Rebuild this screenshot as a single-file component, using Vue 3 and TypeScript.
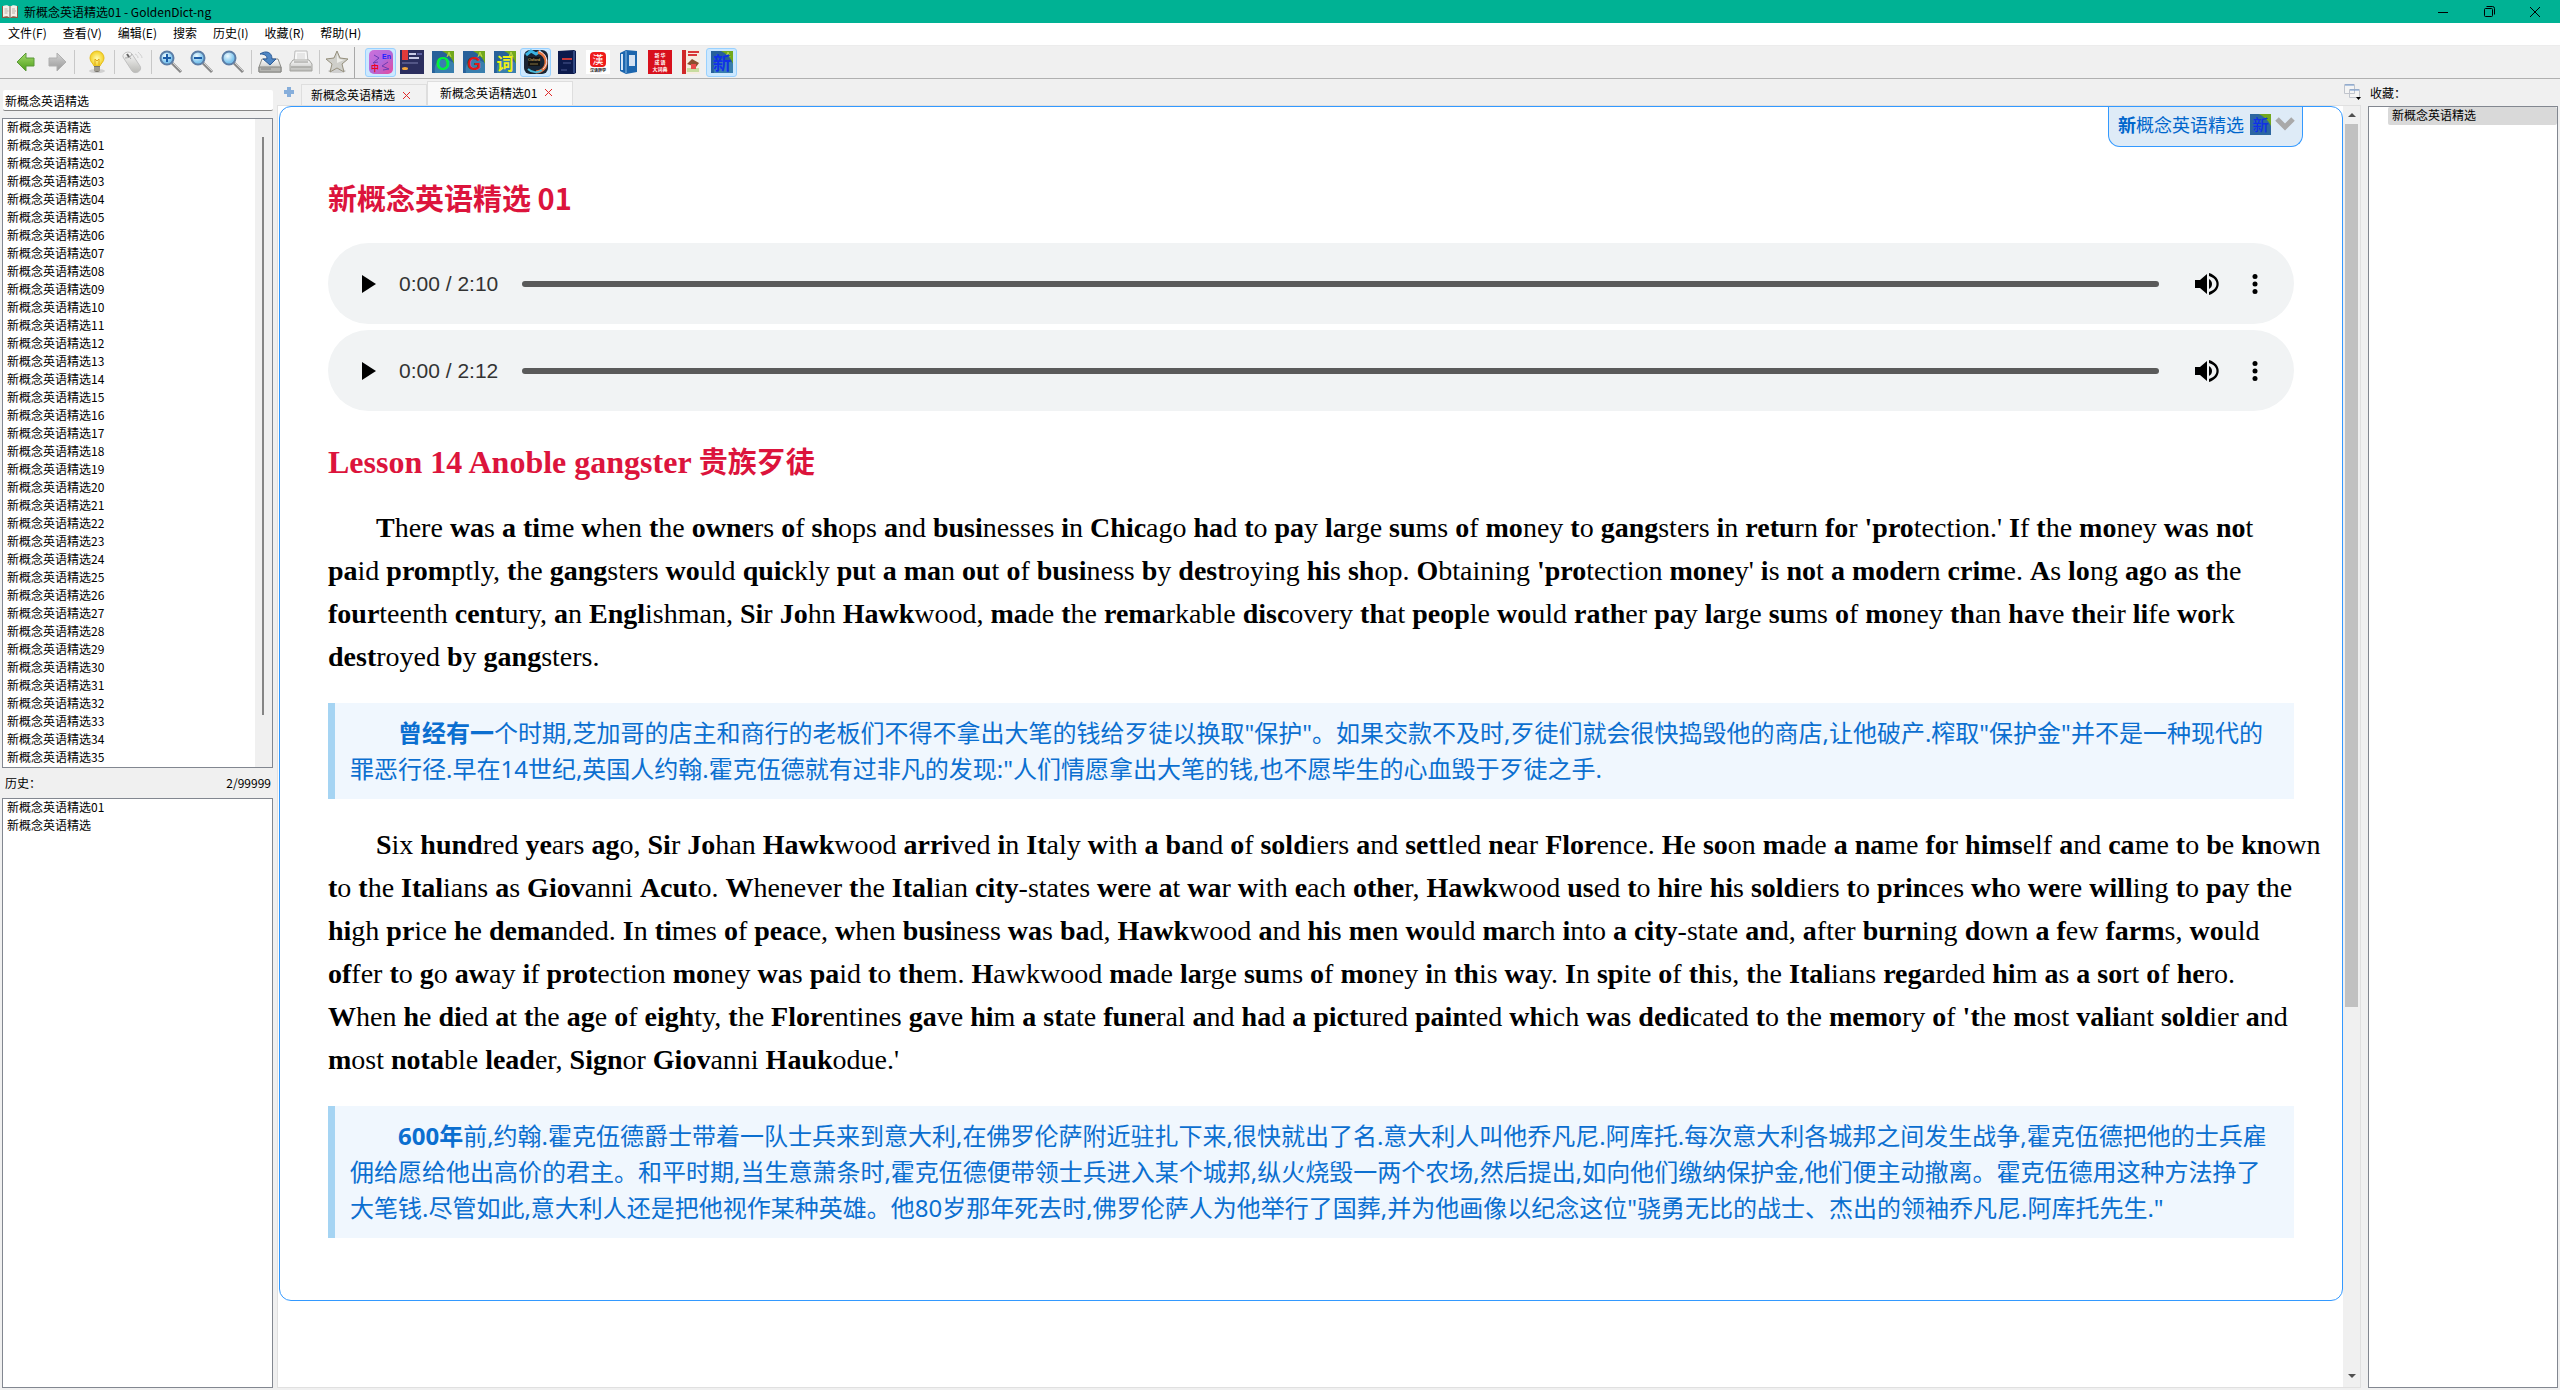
<script setup lang="ts">
import { ref } from 'vue'

interface Run { text: string; strong: boolean }

const menus = ['文件(F)', '查看(V)', '编辑(E)', '搜索', '历史(I)', '收藏(R)', '帮助(H)']
const query = ref('新概念英语精选')
const words = ['新概念英语精选', ...Array.from({ length: 35 }, (_, i) => '新概念英语精选' + String(i + 1).padStart(2, '0'))]
const history = ['新概念英语精选01', '新概念英语精选']
const tabs = [
  { title: '新概念英语精选', active: false },
  { title: '新概念英语精选01', active: true },
]
const tracks = [
  { id: 'track-1', time: '0:00 / 2:10' },
  { id: 'track-2', time: '0:00 / 2:12' },
]
const dictionaries = [
  { id: 'edc', name: '英中词典', on: true },
  { id: 'navy', name: '英语学习词典', on: false },
  { id: 'o', name: 'O 词典', on: false },
  { id: 'g', name: 'G 词典', on: false },
  { id: 'ci', name: '词', on: false },
  { id: 'oxford', name: 'Oxford', on: true },
  { id: 'book', name: '汉语词典', on: false },
  { id: 'han', name: '汉语辞典', on: false },
  { id: 'binder', name: '百科', on: false },
  { id: 'idiom', name: '新华成语大词典', on: false },
  { id: 'america', name: 'America', on: false },
  { id: 'xin', name: '新概念英语精选', on: true },
]
const tileGlyphs: Record<string, { text: string; fill: string; size: number }> = {
  o: { text: 'O', fill: '#00f03c', size: 18 },
  g: { text: 'G', fill: '#e01818', size: 18 },
  ci: { text: '词', fill: '#f0f014', size: 17 },
  xin: { text: '新', fill: '#1030e8', size: 18 },
}

const first = [
  "There was a time when the owners of shops and businesses in Chicago had to pay large sums of money to gangsters in return for 'protection.' If the money was not",
  "paid promptly, the gangsters would quickly put a man out of business by destroying his shop. Obtaining 'protection money' is not a modern crime. As long ago as the",
  'fourteenth century, an Englishman, Sir John Hawkwood, made the remarkable discovery that people would rather pay large sums of money than have their life work',
  'destroyed by gangsters.',
]
const second = [
  'Six hundred years ago, Sir Johan Hawkwood arrived in Italy with a band of soldiers and settled near Florence. He soon made a name for himself and came to be known',
  'to the Italians as Giovanni Acuto. Whenever the Italian city-states were at war with each other, Hawkwood used to hire his soldiers to princes who were willing to pay the',
  'high price he demanded. In times of peace, when business was bad, Hawkwood and his men would march into a city-state and, after burning down a few farms, would',
  'offer to go away if protection money was paid to them. Hawkwood made large sums of money in this way. In spite of this, the Italians regarded him as a sort of hero.',
  "When he died at the age of eighty, the Florentines gave him a state funeral and had a pictured painted which was dedicated to the memory of 'the most valiant soldier and",
  "most notable leader, Signor Giovanni Haukodue.'",
]

const light = new Set(['when', 'the', 'and', 'with', 'each', 'into', 'after', 'down', 'few', 'most'])

// Guided reading: the opening letters of every word are set in bold,
// only one letter for short words, common words and sentence openers.
function emphasise(lines: string[]): Run[][] {
  let opener = true
  return lines.map((line) =>
    line.split(' ').flatMap((word) => {
      const n = opener || light.has(word) || word.length <= 2 ? 1 : word.length >= 6 ? 4 : 2
      opener = /\.'?$/.test(word)
      return [
        { text: word.slice(0, n), strong: true },
        { text: word.slice(n) + ' ', strong: false },
      ]
    }),
  )
}
const english = [first, second].map(emphasise)

const chinese = [
  {
    lead: '曾经有一',
    lines: [
      '个时期,芝加哥的店主和商行的老板们不得不拿出大笔的钱给歹徒以换取"保护"。如果交款不及时,歹徒们就会很快捣毁他的商店,让他破产.榨取"保护金"并不是一种现代的',
      '罪恶行径.早在14世纪,英国人约翰.霍克伍德就有过非凡的发现:"人们情愿拿出大笔的钱,也不愿毕生的心血毁于歹徒之手.',
    ],
  },
  {
    lead: '600年',
    lines: [
      '前,约翰.霍克伍德爵士带着一队士兵来到意大利,在佛罗伦萨附近驻扎下来,很快就出了名.意大利人叫他乔凡尼.阿库托.每次意大利各城邦之间发生战争,霍克伍德把他的士兵雇',
      '佣给愿给他出高价的君主。和平时期,当生意萧条时,霍克伍德便带领士兵进入某个城邦,纵火烧毁一两个农场,然后提出,如向他们缴纳保护金,他们便主动撤离。霍克伍德用这种方法挣了',
      '大笔钱.尽管如此,意大利人还是把他视作某种英雄。他80岁那年死去时,佛罗伦萨人为他举行了国葬,并为他画像以纪念这位"骁勇无比的战士、杰出的领袖乔凡尼.阿库托先生."',
    ],
  },
]
</script>

<template>
  <div class="window">
    <header class="titlebar">
      <svg class="book" viewBox="0 0 16 14" width="16" height="14">
        <path d="M0 1v12h16V1z" fill="#8b5a44" />
        <path d="M1 1c3-1 5-1 7 1 2-2 4-2 7-1v11c-3-1-5-1-7 1-2-2-4-2-7-1z" fill="#f4f0ea" />
        <path d="M8 2v11" stroke="#665a50" />
        <path d="M2.500 4h3M2.500 6h4M2.500 8h3M10 4h3M10 6h4M10 8h3" stroke="#b8b0a8" />
      </svg>
      <span class="title">新概念英语精选01 - GoldenDict-ng</span>
      <div class="controls">
        <button aria-label="最小化"><svg viewBox="0 0 10 10" width="10" height="10"><path d="M0 5.500h10" stroke="#000" /></svg></button>
        <button aria-label="还原"><svg viewBox="0 0 11 11" width="11" height="11" fill="none" stroke="#000"><rect x=".5" y="2.500" width="8" height="8" rx="1" /><path d="M2.500 .5h6a2 2 0 0 1 2 2v6" /></svg></button>
        <button aria-label="关闭"><svg viewBox="0 0 10 10" width="10" height="10"><path d="M0 0l10 10M10 0L0 10" stroke="#000" /></svg></button>
      </div>
    </header>

    <nav class="menubar">
      <button v-for="m in menus" :key="m">{{ m }}</button>
    </nav>

    <svg class="defs" width="0" height="0" aria-hidden="true">
      <defs>
        <linearGradient id="green" x2="0" y2="1"><stop stop-color="#a6dc6c" /><stop offset="1" stop-color="#4a9c18" /></linearGradient>
        <linearGradient id="grey" x2="0" y2="1"><stop stop-color="#d4d4d4" /><stop offset="1" stop-color="#979797" /></linearGradient>
        <linearGradient id="silver" x2="0" y2="1"><stop stop-color="#fbfbfb" /><stop offset="1" stop-color="#b9b9b5" /></linearGradient>
        <linearGradient id="violet" x2="1" y2="1"><stop stop-color="#d070d8" /><stop offset=".5" stop-color="#b06adc" /><stop offset="1" stop-color="#e84a9c" /></linearGradient>
        <radialGradient id="bulb"><stop stop-color="#fffcb0" /><stop offset="1" stop-color="#f4d020" /></radialGradient>
        <radialGradient id="lens" cx=".4" cy=".35"><stop stop-color="#f0fbff" /><stop offset="1" stop-color="#7cc4ee" /></radialGradient>
      </defs>
    </svg>

    <div class="toolbar">
      <div class="group nav-group">
        <button aria-label="后退"><svg viewBox="0 0 20 20" width="20" height="20"><path d="M1 10L10 1v5h8v8h-8v5z" fill="url(#green)" stroke="#5a9838" /></svg></button>
        <button aria-label="前进"><svg viewBox="0 0 20 20" width="20" height="20"><path d="M19 10L10 1v5H2v8h8v5z" fill="url(#grey)" stroke="#b0b0b0" /></svg></button>
      </div>
      <div class="group bulb-group">
        <button aria-label="扫描取词"><svg viewBox="0 0 22 24" width="22" height="24"><ellipse cx="11" cy="21" rx="8" ry="2" fill="#d0d0d0" /><path d="M11 1a7 7 0 0 0-7 7c0 4 3 5 4 8h6c1-3 4-4 4-8a7 7 0 0 0-7-7z" fill="url(#bulb)" stroke="#e4bc20" /><path d="M9 15V9l2 2 2-2v6" fill="none" stroke="#e0a818" /><path d="M8 16h6v5l-2 1h-2l-2-1z" fill="#77746c" /><path d="M8 18h6M8 20h6" stroke="#c4c0b4" /></svg></button>
      </div>
      <div class="group mouse-group">
        <button aria-label="发音"><svg viewBox="0 0 24 24" width="24" height="24"><path d="M2 7c-1-4 6-7 9-3l8 12c3 5-5 9-8 5z" fill="url(#silver)" stroke="#c0c0c0" /><path d="M4 8c3 0 6-1 7-4M6 4l4 5" fill="none" stroke="#aaa" /><path d="M6 4l2 3" stroke="#666" stroke-width="2" /><path d="M14 4c2 1 3 2 3 4M17 2c2 2 4 4 4 6" fill="none" stroke="#d0d0d0" /></svg></button>
      </div>
      <div class="group zoom-group">
        <button v-for="z in ['放大', '缩小', '还原大小']" :key="z" :aria-label="z"><svg viewBox="0 0 24 24" width="24" height="24"><path d="M13 13l9 9" stroke="#888" stroke-width="3" /><path d="M14 13l8 8" stroke="#d0d0d0" /><circle cx="8" cy="8" r="6.500" fill="url(#lens)" stroke="#5b7da6" stroke-width="2" /><path v-if="z === '缩小'" d="M4 8h8" stroke="#1c5ca8" stroke-width="2" /><path v-if="z === '放大'" d="M4 8h8M8 4v8" stroke="#1c5ca8" stroke-width="2" /></svg></button>
      </div>
      <div class="group file-group">
        <button aria-label="保存"><svg viewBox="0 0 24 24" width="24" height="24"><path d="M4 9h16l3 8v5H1v-5z" fill="url(#silver)" stroke="#8c8c88" /><path d="M1 17h22v5H1z" fill="#b4b4b0" stroke="#858582" /><path d="M3 19h10" stroke="#888" /><path d="M2 4c6-4 12-2 12 5h4l-6 6-7-6h4c0-4-3-5-7-5z" fill="#4f86c4" stroke="#2c5c98" /></svg></button>
        <button aria-label="打印"><svg viewBox="0 0 24 24" width="24" height="24"><path d="M6 1h12l1 11H5z" fill="#f8f8f8" stroke="#bcbcbc" /><path d="M8 4h8M8 6h8M8 8h8" stroke="#d4d4d4" /><path d="M4 10h16l3 4v7H1v-7z" fill="url(#silver)" stroke="#a4a4a0" /><path d="M5 12h14M2 17h20" stroke="#92928e" /></svg></button>
      </div>
      <div class="group star-group">
        <button aria-label="收藏"><svg viewBox="0 0 24 24" width="24" height="24"><ellipse cx="12" cy="21" rx="9" ry="2" fill="#d0d0d0" /><path d="M12 1l3 7 8 1-6 5 2 8-7-4-7 4 2-8-6-5 8-1z" fill="#cfcfca" stroke="#958f7c" stroke-linejoin="round" /><path d="M12 4l2 5 5 1-7 3z" fill="#eeeeea" /></svg></button>
      </div>
      <div class="dicts">
        <button v-for="d in dictionaries" :key="d.id" :class="{ on: d.on }" :aria-label="d.name">
          <svg viewBox="0 0 24 24" width="24" height="24">
            <template v-if="tileGlyphs[d.id]">
              <path d="M1 1h22v22H1z" fill="#27609a" /><path d="M4 23C2 12 10 5 23 13V23z" fill="#397fae" /><path d="M11 1h12v13C21 8 17 4 11 1z" fill="#72a81c" />
              <path d="M16 7l2-5 2 5M17 5h2" fill="none" stroke="#bcd84a" />
              <text class="latin" x="12" y="20" :font-size="tileGlyphs[d.id].size" font-weight="700" :fill="tileGlyphs[d.id].fill" text-anchor="middle">{{ tileGlyphs[d.id].text }}</text>
            </template>
            <template v-else-if="d.id === 'edc'">
              <rect width="24" height="24" rx="5" fill="url(#violet)" /><path d="M5 5l5 3-6 5 5-1M19 12l-6 4 7 3-6 1" fill="none" stroke="#6a3cb4" /><text class="latin" x="13" y="9" font-size="7" font-weight="700" fill="#2020ff">En</text><text x="2" y="21" font-size="8" font-weight="700" fill="#f00020">中</text>
            </template>
            <template v-else-if="d.id === 'navy'">
              <path d="M0 0h24v24H0z" fill="#2b2e5e" /><path d="M2 0h6v10H2z" fill="#e03a3a" /><path d="M9 4h7M9 8h10" stroke="#c9cbe6" stroke-width="2" /><path d="M2 13h16" stroke="#7c7fae" /><path d="M17 4h5" stroke="#5c60a0" stroke-width="2" /><ellipse cx="5" cy="18.500" rx="3" ry="1.500" fill="#f2a53a" />
            </template>
            <template v-else-if="d.id === 'oxford'">
              <rect width="24" height="24" rx="6" fill="#182434" /><path d="M2 5L7 1l5 3 5-3" fill="none" stroke="#38b4e4" stroke-width="3" /><path d="M14 2c12 4 10 20-2 20" fill="none" stroke="#e8743c" stroke-width="3" /><path d="M15 1c10 4 9 14 4 18" fill="none" stroke="#ece4f4" /><path d="M4 7h12v9H4z" fill="#131313" /><text class="latin" x="10" y="11" font-size="4" fill="#e8c878" text-anchor="middle">Oxford</text><path d="M6 14h8" stroke="#8a7440" /><path d="M4 19c4 4 10 4 14 1" fill="none" stroke="#48b8d8" stroke-width="2" />
            </template>
            <template v-else-if="d.id === 'book'">
              <path d="M3 1l16-1 2 1v22l-2 1H3z" fill="#0c1a4c" /><path d="M19 1v22" stroke="#5878b8" /><path d="M7 9h10" stroke="#c83838" stroke-width="2" /><path d="M8 13h8M6 20h6" stroke="#4c5890" />
            </template>
            <template v-else-if="d.id === 'han'">
              <path d="M0 0h24v24H0z" fill="#fff" /><rect x="4" y="2" width="16" height="15" rx="4" fill="#ee1c1c" /><text x="12" y="14" font-size="11" fill="#fff" text-anchor="middle">漢</text><text x="12" y="22" font-size="4" font-weight="700" fill="#222" text-anchor="middle">汉语辞学</text>
            </template>
            <template v-else-if="d.id === 'binder'">
              <path d="M3 3l6-3v24l-6-3zM9 0l11 1v21L9 24z" fill="#1c66ae" /><path d="M5 4v16" stroke="#d8e8f8" stroke-width="2" /><path d="M12 5h6v11h-6z" fill="#d4e2f2" /><path d="M9 1v22" stroke="#8cbce4" />
            </template>
            <template v-else-if="d.id === 'idiom'">
              <path d="M0 0h24v24H0z" fill="#d8101c" /><g fill="#fff" font-size="5" font-weight="700" text-anchor="middle"><text x="12" y="7">新 华</text><text x="12" y="14">成 语</text><text x="12" y="21">大词典</text></g>
            </template>
            <template v-else>
              <path d="M3 0h18v24H3z" fill="#f6ece0" /><path d="M3 0h4v24H3z" fill="#d02828" /><path d="M9 2h11M9 5h9" stroke="#d83838" stroke-width="2" /><path d="M8 14l5-5 7 4-3 4z" fill="#8c4c2c" /><path d="M8 18h12v4H8z" fill="#c8dca0" /><path d="M12 14h5v5h-5z" fill="#e84848" />
            </template>
          </svg>
        </button>
      </div>
    </div>

    <main class="body">
      <aside class="left">
        <input v-model="query" class="search" type="text" aria-label="搜索词条" />
        <div class="box words">
          <ul><li v-for="w in words" :key="w">{{ w }}</li></ul>
          <div class="mini-scroll"><i></i></div>
        </div>
        <div class="caption"><span>历史：</span><span>2/99999</span></div>
        <div class="box grow">
          <ul><li v-for="w in history" :key="w">{{ w }}</li></ul>
        </div>
      </aside>

      <section class="center">
        <div class="tabs">
          <button class="add" aria-label="新建标签"><svg viewBox="0 0 12 12" width="12" height="12"><path d="M4 1h4v3h3v4H8v3H4V8H1V4h3z" fill="#86aedb" /></svg></button>
          <div v-for="t in tabs" :key="t.title" class="tab" :class="{ active: t.active }">
            <button>{{ t.title }}</button>
            <button class="close" aria-label="关闭标签"><svg viewBox="0 0 7 7" width="7" height="7"><path d="M0 0l7 7M7 0L0 7" stroke="#e02828" /></svg></button>
          </div>
          <button class="tab-list" aria-label="标签列表"><svg viewBox="0 0 17 16" width="17" height="16"><path d="M.5 .5h10v9H.5zM5.500 5.500h10v8h-10z" fill="#f4f4f4" stroke="#c0c4cc" /><path d="M1 1h9M6 6h9" stroke="#6a94cc" /><path d="M12 13h5l-2.500 3z" /></svg></button>
        </div>

        <div class="pane">
          <article class="card">
            <div class="badge-row">
              <button class="badge">
                <span><b>新</b>概念英语精选</span>
                <svg viewBox="0 0 22 22" width="21" height="21"><path d="M0 0h22v22H0z" fill="#2c66a0" /><path d="M9 0h13v13C20 7 15 3 9 0z" fill="#72a81c" /><text x="11" y="18" font-size="17" font-weight="500" fill="#1030e8" text-anchor="middle">新</text></svg>
                <svg viewBox="0 0 20 14" width="20" height="14"><path d="M2 2l8 8 8-8" fill="none" stroke="#a9a9a9" stroke-width="5" /></svg>
              </button>
            </div>
            <div class="content">
              <h1>新概念英语精选 01</h1>
              <div v-for="t in tracks" :key="t.id" class="player">
                <button aria-label="播放"><svg viewBox="0 0 14 18" width="14" height="18"><path d="M0 0l14 9L0 18z" /></svg></button>
                <label :for="t.id">{{ t.time }}</label>
                <input :id="t.id" type="range" value="0" />
                <button aria-label="音量"><svg viewBox="0 0 24 24" width="24" height="24"><path d="M0 8v8h5l7 6V2L5 8zM14 7v10c4-2 4-8 0-10zM14 1v3c10 3 10 13 0 16v3c13-4 13-18 0-22z" /></svg></button>
                <button aria-label="更多"><svg viewBox="0 0 6 20" width="6" height="20"><circle cx="3" cy="2.500" r="2.500" /><circle cx="3" cy="10" r="2.500" /><circle cx="3" cy="17.500" r="2.500" /></svg></button>
              </div>
              <h2><span lang="en">Lesson 14 Anoble gangster</span> 贵族歹徒</h2>
              <template v-for="(para, i) in english" :key="i">
                <p class="en"><template v-for="(line, j) in para" :key="j"><template v-for="(run, k) in line" :key="k"><b v-if="run.strong">{{ run.text }}</b><template v-else>{{ run.text }}</template></template><br v-if="j < para.length - 1" /></template></p>
                <p class="zh"><b>{{ chinese[i].lead }}</b><template v-for="(line, j) in chinese[i].lines" :key="j">{{ line }}<br v-if="j < chinese[i].lines.length - 1" /></template></p>
              </template>
            </div>
          </article>
          <div class="scrollbar">
            <svg viewBox="0 0 8 4" width="8" height="4"><path d="M0 4h8L4 0z" fill="#505050" /></svg>
            <div class="rail"><i></i></div>
            <svg viewBox="0 0 8 4" width="8" height="4"><path d="M0 0h8L4 4z" fill="#505050" /></svg>
          </div>
        </div>
      </section>

      <aside class="right">
        <div class="fav-caption">收藏：</div>
        <div class="box grow"><ul class="favs"><li>新概念英语精选</li></ul></div>
      </aside>
    </main>
  </div>
</template>

<style>
body { margin: 0; }
</style>

<style scoped>
* { box-sizing: border-box; }
.window { display: flex; flex-direction: column; min-height: 100vh; background: #f0f0f0; color: #000; font: 12px/18px "Noto Sans CJK SC", "Noto Sans", sans-serif; }
button { display: inline-flex; align-items: center; justify-content: center; margin: 0; padding: 0; border: 0; background: none; color: inherit; font: inherit; }
svg { display: block; flex: none; overflow: visible; }
ul { list-style: none; margin: 0; padding: 0; flex: 1; }
.defs { position: absolute; }
.latin { font-family: "Liberation Sans", "Noto Sans CJK SC", sans-serif; }

.titlebar { display: flex; align-items: center; height: 23px; padding: 0 2px; background: #00b294; }
.title { margin-left: 6px; }
.controls { display: flex; margin-left: auto; }
.controls button { width: 46px; height: 20px; }

.menubar { display: flex; gap: 16px; height: 23px; padding: 0 8px 2px; background: #fff; border-bottom: 1px solid #ececec; }

.toolbar { display: flex; align-items: center; height: 33px; border-bottom: 1px solid #b0b0b0; }
.group { display: flex; align-items: center; justify-content: center; height: 24px; gap: 7px; border-right: 1px solid #c8c8c8; }
.nav-group { width: 75px; padding-left: 8px; gap: 11px; }
.bulb-group { width: 40px; padding-left: 4px; }
.mouse-group { width: 37px; }
.zoom-group { width: 100px; }
.file-group { width: 68px; }
.star-group { width: 35px; height: 31px; border-color: #a8a8a8; }
.dicts { display: flex; margin-left: 10px; }
.dicts button { width: 31px; height: 29px; border: 1px solid transparent; border-radius: 3px; }
.dicts .on { background: #cce8ff; border-color: #99d1ff; }

.body { display: flex; flex: 1; }
.box { display: flex; background: #fff; border: 1px solid #828790; }
.grow { flex: 1; }
.box li { height: 18px; padding-left: 4px; line-height: 16px; white-space: nowrap; }
.left { display: flex; flex-direction: column; width: 275px; padding: 11px 2px 2px; }
.search { height: 21px; margin: 0 0 7px 1px; padding: 0 2px; border: 0; border-bottom: 1px solid #868686; border-radius: 2px; outline: 0; background: #fff; color: #000; font: inherit; }
.mini-scroll { width: 17px; padding: 18px 7px 52px; background: #f0f0f0; }
.mini-scroll i { display: block; width: 2px; height: 100%; background: #858585; }
.caption { display: flex; align-items: center; justify-content: space-between; height: 30px; padding: 0 2px 0 3px; }

.center { display: flex; flex: 1; flex-direction: column; min-width: 0; padding: 0 4px 0 2px; }
.tabs { display: flex; align-items: flex-end; height: 26px; }
.add { width: 24px; height: 26px; }
.tab { display: flex; align-items: center; gap: 8px; height: 21px; padding: 0 16px 0 9px; border: 1px solid #dedede; border-bottom: 0; background: #f2f2f2; }
.tab.active { height: 24px; padding: 0 20px 2px 12px; background: #f9f9f9; }
.tab .close { width: 7px; height: 18px; }
.tab-list { align-self: center; margin-left: auto; }
.pane { display: flex; flex: 1; align-items: flex-start; margin-bottom: 2px; padding-left: 1px; border: 1px solid #e0e0e0; background: #fff; }
.card { flex: 1; min-width: 0; padding-bottom: 62px; border: 1px solid #3399ff; border-radius: 12px; }
.badge-row { display: flex; justify-content: flex-end; padding-right: 39px; }
.badge { gap: 4px; height: 40px; padding: 0 7px 5px 9px; border: 1px solid #3399ff; border-top: 0; border-radius: 0 0 12px 12px; background: #deebf7; color: #0066cc; font: 18px/24px "Noto Sans CJK SC", sans-serif; }
.badge svg:first-of-type { margin-left: 2px; }
.content { padding: 29px 48px 0; }
h1, h2 { margin: 0; color: #dc143c; font-size: 29px; line-height: 43px; }
h1 { margin-bottom: 24px; font-family: "Noto Sans CJK SC", sans-serif; }
h2 { height: 43px; margin: 30px 0 22px; font-family: "Liberation Serif", "Noto Sans CJK SC", serif; }
h2 span { font-size: 32px; }

.player { display: flex; align-items: center; height: 81px; margin-bottom: 6px; padding: 0 36px 0 34px; border-radius: 41px; background: #f1f3f4; }
.player label { margin-left: 23px; color: #333; font: 21px/24px "Liberation Sans", sans-serif; }
.player input { flex: 1; height: 6px; min-width: 0; margin: 0 36px 0 24px; border-radius: 3px; background: #5a5a5a; appearance: none; }
.player input::-webkit-slider-thumb { width: 0; height: 0; appearance: none; }
.player button:last-child { margin-left: 33px; }

p { margin: 0; text-indent: 48px; white-space: nowrap; }
.en { font: 28px/43px "Liberation Serif", serif; }
.zh { margin: 25px 0 24px; padding: 12px 15px; border-left: 7px solid #a5d4f3; background: #f0f7fe; color: #0b6fd0; font: 24px/36px "Noto Sans", "Noto Sans CJK SC", sans-serif; }
.zh:last-child { margin-bottom: 0; }

.scrollbar { display: flex; flex-direction: column; align-items: center; align-self: stretch; gap: 7px; width: 17px; padding: 7px 0 9px; background: #f0f0f0; }
.rail { flex: 1; width: 13px; }
.rail i { display: block; height: 71%; background: #c1c1c1; }

.right { display: flex; flex-direction: column; width: 195px; padding: 0 2px 2px 3px; }
.fav-caption { height: 27px; padding: 5px 2px; }
.favs { padding-left: 19px; }
.favs li { border-radius: 2px; background: #d9d9d9; }
</style>
